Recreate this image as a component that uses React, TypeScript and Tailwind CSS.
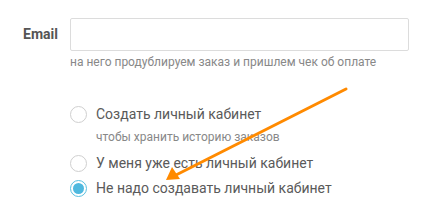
import React from "react";

const font = { fontFamily: "Roboto, 'Noto Sans', sans-serif" };

function Radio({ checked }: { checked?: boolean }) {
  return checked ? (
    <span className="flex h-[17px] w-[17px] shrink-0 items-center justify-center rounded-full border border-[#5bc0e0] bg-white">
      <span className="h-[11px] w-[11px] rounded-full bg-[#4fb9df]" />
    </span>
  ) : (
    <span className="h-[17px] w-[17px] shrink-0 rounded-full border border-[#cfcfcf] bg-white" />
  );
}

export default function App() {
  return (
    <div className="relative h-[218px] w-[426px] overflow-hidden bg-white text-[#5a5a5a]" style={font}>
      <div className="flex pt-[18px]">
        <div className="flex h-[33px] w-[70px] items-center justify-end pr-[12px] text-[14px] font-bold text-[#555]">
          Email
        </div>
        <div className="flex flex-col">
          <div className="h-[33px] w-[339px] rounded-[2px] border border-[#dcdcdc] bg-white" />
          <div className="mt-[3px] text-[12px] leading-[17px] text-[#888]">
            на него продублируем заказ и пришлем чек об оплате
          </div>
        </div>
      </div>

      <div className="ml-[70px] mt-[33px] flex flex-col">
        <label className="flex items-center gap-[9px]">
          <Radio />
          <span className="text-[14px] leading-[20px]">Создать личный кабинет</span>
        </label>
        <div className="ml-[26px] mt-[4px] text-[12px] leading-[18px] text-[#888]">
          чтобы хранить историю заказов
        </div>
        <label className="mt-[7px] flex items-center gap-[9px]">
          <Radio />
          <span className="text-[14px] leading-[20px]">У меня уже есть личный кабинет</span>
        </label>
        <label className="mt-[5px] flex items-center gap-[9px]">
          <Radio checked />
          <span className="text-[14px] leading-[20px]">Не надо создавать личный кабинет</span>
        </label>
      </div>

      <svg className="absolute left-0 top-0" width="426" height="218" viewBox="0 0 426 218">
        <line x1="346" y1="89" x2="176" y2="175" stroke="#ff8a00" strokeWidth="3" strokeLinecap="round" />
        <polygon points="166,180 172,167 180,179" fill="#ff8a00" />
      </svg>
    </div>
  );
}
